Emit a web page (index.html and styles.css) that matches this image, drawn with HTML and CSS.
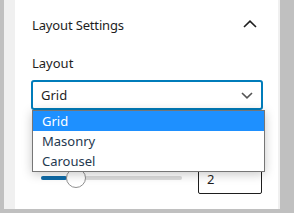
FILE: index.html
```html
<!DOCTYPE html>
<html>
<head>
<meta charset="utf-8">
<link rel="stylesheet" href="styles.css">
</head>
<body>
<div class="frame">
  <div class="panel">
    <div class="content">
      <div class="header">
        <span class="title">Layout Settings</span>
        <svg class="chev-up" width="14" height="8" viewBox="0 0 14 8"><polyline points="1,7 7,1.2 13,7" fill="none" stroke="#1e1e1e" stroke-width="1.6"/></svg>
      </div>
      <div class="label">Layout</div>
      <div class="select">
        <span class="select-text">Grid</span>
        <svg class="chev-down" width="12" height="7" viewBox="0 0 12 7"><polyline points="1,1 6,5.8 11,1" fill="none" stroke="#555" stroke-width="1.6"/></svg>
      </div>
      <div class="range-row">
        <div class="range">
          <div class="track"><div class="fill"></div><div class="thumb"></div></div>
        </div>
        <div class="number">2</div>
      </div>
      <div class="dropdown">
        <div class="opt active">Grid</div>
        <div class="opt">Masonry</div>
        <div class="opt">Carousel</div>
      </div>
    </div>
    <div class="edge"></div>
  </div>
</div>
</body>
</html>
```
FILE: styles.css
```css
html, body {
  margin: 0;
  padding: 0;
  background: #c0c0c0;
  width: 294px;
  height: 213px;
  overflow: hidden;
  font-family: "Noto Sans", "Open Sans", sans-serif;
  color: #1e1e1e;
}
.frame {
  padding-left: 4px;
  width: 276px;
  height: 209px;
}
.panel {
  display: flex;
  height: 209px;
  background: #f0f0f0;
  padding-left: 11px;
  box-sizing: border-box;
}
.content {
  position: relative;
  background: #fff;
  width: 263px;
  padding-left: 17px;
  padding-right: 15px;
  box-sizing: border-box;
}
.edge {
  width: 2px;
  background: #f0f0f0;
}
.header {
  display: flex;
  align-items: center;
  justify-content: space-between;
  height: 50px;
  padding-right: 6px;
}
.title {
  font-size: 13px;
  line-height: 18px;
  letter-spacing: -0.15px;
}
.chev-up {
  margin-top: -3px;
}
.label {
  font-size: 13px;
  line-height: 18px;
  margin-top: 4px;
}
.select {
  margin-top: 8px;
  height: 30px;
  border: 2px solid #007cba;
  border-radius: 3px;
  box-sizing: border-box;
  display: flex;
  align-items: center;
  justify-content: space-between;
  padding-left: 8px;
  padding-right: 8px;
  margin-left: -1px;
}
.select-text {
  font-size: 13px;
  line-height: 18px;
}
.range-row {
  display: flex;
  align-items: center;
  margin-top: 53px;
  height: 30px;
}
.range {
  flex: none;
  width: 141px;
  margin-left: 9px;
  margin-right: 16px;
}
.track {
  position: relative;
  height: 4px;
  border-radius: 2px;
  background: #dcdcdc;
}
.fill {
  width: 26px;
  height: 4px;
  border-radius: 2px;
  background: #0f6ba8;
}
.thumb {
  position: absolute;
  left: 25px;
  top: -8px;
  width: 18px;
  height: 18px;
  border: 1px solid #8f8f8f;
  border-radius: 50%;
  background: #fff;
}
.number {
  width: 64px;
  height: 30px;
  box-sizing: border-box;
  border: 1px solid #1e1e1e;
  border-radius: 2px;
  font-size: 13px;
  line-height: 28px;
  padding-left: 8px;
  margin-top: 2px;
}
.dropdown {
  position: absolute;
  left: 17px;
  top: 110px;
  width: 231px;
  border: 1px solid #767676;
  background: #fff;
  box-shadow: 0 2px 10px rgba(0, 0, 0, 0.22);
}
.opt {
  height: 20px;
  line-height: 20px;
  font-size: 13px;
  padding-left: 9px;
  color: #24384f;
}
.opt.active {
  background: #1e90ff;
  color: #fff;
}
```
